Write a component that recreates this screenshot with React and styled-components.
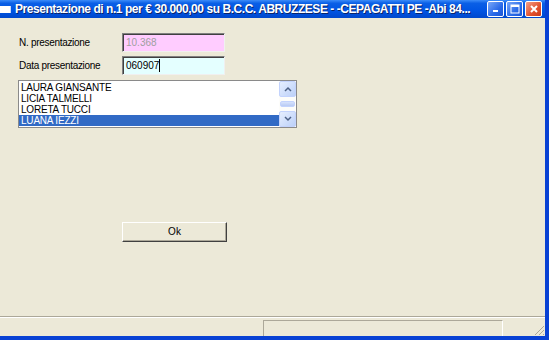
import React from 'react';
import styled, { createGlobalStyle } from 'styled-components';

const Global = createGlobalStyle`
  html, body {
    margin: 0;
    padding: 0;
    background: #ece9d8;
  }
  #root {
    width: 549px;
    height: 340px;
  }
`;

const Finestra = styled.div`
  width: 549px;
  height: 340px;
  box-sizing: border-box;
  display: flex;
  flex-direction: column;
  border-right: 4px solid #0841d4;
  border-bottom: 4px solid #0841d4;
  font-family: "Liberation Sans", Arial, sans-serif;
  overflow: hidden;
`;

const BarraTitolo = styled.div`
  height: 18px;
  flex: none;
  display: flex;
  align-items: center;
  margin-right: -4px;
  background: linear-gradient(180deg, #3c8cf8 0%, #0a5fe6 18%, #0054e3 60%, #0048cc 100%);
  color: #fff;
`;

const IconaTitolo = styled.div`
  width: 10px;
  height: 7px;
  margin: 1px 4px 0 0;
  background: #fff;
  border-right: 1px solid #c8d8f8;
`;

const TestoTitolo = styled.div`
  flex: 1;
  font-weight: bold;
  font-size: 12px;
  letter-spacing: -0.45px;
  white-space: nowrap;
  overflow: hidden;
  text-shadow: 1px 1px 0 #0a246a;
`;

const Pulsanti = styled.div`
  display: flex;
  gap: 2px;
  margin-right: 7px;
`;

const PulsanteFinestra = styled.div`
  width: 17px;
  height: 16px;
  border: 1px solid #fff;
  border-radius: 2px;
  box-sizing: border-box;
  background: ${p => (p.$close ? 'linear-gradient(135deg, #f3a08a, #e2512d 60%, #c93a1c)' : 'linear-gradient(135deg, #7aa8f8, #2a6ae8 60%, #1c55d4)')};
  display: flex;
  align-items: center;
  justify-content: center;
`;

const Corpo = styled.div`
  flex: 1;
  display: flex;
  flex-direction: column;
  background: #ece9d8;
`;

const Modulo = styled.div`
  flex: 1;
  display: flex;
  flex-direction: column;
  padding: 15px 0 0 19px;
`;

const Riga = styled.div`
  display: flex;
  align-items: center;
  height: 19px;
  margin-bottom: 4px;
`;

const Etichetta = styled.div`
  width: 103px;
  font-size: 10px;
  letter-spacing: -0.3px;
  color: #000;
`;

const Campo = styled.div`
  width: 103px;
  height: 19px;
  box-sizing: border-box;
  border-top: 1px solid #808080;
  border-left: 1px solid #808080;
  border-right: 1px solid #f0f0f0;
  border-bottom: 1px solid #f0f0f0;
  box-shadow: inset 1px 1px 0 #404040;
  background: ${p => p.$bg};
  color: ${p => p.$color};
  font-size: 10px;
  padding: 3px 0 0 3px;
  display: flex;
  align-items: flex-start;
`;

const Cursore = styled.span`
  display: inline-block;
  width: 1px;
  height: 13px;
  background: #000;
  margin-top: -1px;
`;

const Lista = styled.div`
  width: 279px;
  height: 48px;
  margin: 1px 0 0 -1px;
  box-sizing: border-box;
  border: 1px solid #8a8a8a;
  background: #fff;
  display: flex;
`;

const Voci = styled.div`
  flex: 1;
  padding-top: 1px;
`;

const Voce = styled.div`
  height: 11px;
  line-height: 11px;
  font-size: 10px;
  letter-spacing: -0.2px;
  padding-left: 2px;
  background: ${p => (p.$sel ? '#316ac5' : 'transparent')};
  color: ${p => (p.$sel ? '#fff' : '#000')};
  overflow: hidden;
  white-space: nowrap;
`;

const Scorrimento = styled.div`
  width: 17px;
  display: flex;
  flex-direction: column;
  background: #fdfdfa;
`;

const Freccia = styled.div`
  height: 16px;
  box-sizing: border-box;
  border: 1px solid #c3d3fd;
  border-radius: 2px;
  background: linear-gradient(135deg, #e6efff, #bcd0f8);
  display: flex;
  align-items: center;
  justify-content: center;
`;

const Pista = styled.div`
  flex: 1;
  display: flex;
  align-items: center;
  justify-content: center;
`;

const Cursorino = styled.div`
  width: 15px;
  height: 6px;
  border-radius: 2px;
  background: linear-gradient(180deg, #d6e2fc, #b8cbf4);
  border: 1px solid #c3d3fd;
  box-sizing: border-box;
`;

const ZonaPulsante = styled.div`
  margin: 93px 0 0 103px;
`;

const PulsanteOk = styled.button`
  width: 105px;
  height: 20px;
  box-sizing: border-box;
  background: #ece9d8;
  border: none;
  border-top: 1px solid #fff;
  border-left: 1px solid #fff;
  border-right: 1px solid #404040;
  border-bottom: 1px solid #404040;
  box-shadow: inset -1px -1px 0 #aca899;
  font-family: "Liberation Sans", Arial, sans-serif;
  font-size: 10px;
  color: #000;
  padding: 0;
`;

const Separatore = styled.div`
  height: 1px;
  background: #aca899;
  border-bottom: 1px solid #fff;
`;

const BarraStato = styled.div`
  height: 18px;
  display: flex;
  align-items: flex-end;
  padding-left: 263px;
`;

const Pannello = styled.div`
  width: 240px;
  height: 16px;
  box-sizing: border-box;
  border-top: 1px solid #aca899;
  border-left: 1px solid #aca899;
  border-right: 1px solid #fff;
  border-bottom: none;
`;

const Maniglia = styled.svg`
  margin-left: auto;
  display: block;
`;

export default function App() {
  return (
    <>
      <Global />
      <Finestra>
        <BarraTitolo>
          <IconaTitolo />
          <TestoTitolo>Presentazione di n.1 per € 30.000,00 su B.C.C. ABRUZZESE - -CEPAGATTI PE -Abi 84...</TestoTitolo>
          <Pulsanti>
            <PulsanteFinestra>
              <svg width="8" height="8"><rect x="1" y="5" width="5" height="2" fill="#fff" /></svg>
            </PulsanteFinestra>
            <PulsanteFinestra>
              <svg width="10" height="10"><rect x="1" y="1" width="8" height="8" fill="none" stroke="#fff" strokeWidth="1" /><rect x="1" y="1" width="8" height="2" fill="#fff" /></svg>
            </PulsanteFinestra>
            <PulsanteFinestra $close>
              <svg width="10" height="10"><path d="M2 2 L8 8 M8 2 L2 8" stroke="#fff" strokeWidth="2" /></svg>
            </PulsanteFinestra>
          </Pulsanti>
        </BarraTitolo>
        <Corpo>
          <Modulo>
            <Riga>
              <Etichetta>N. presentazione</Etichetta>
              <Campo $bg="#ffccff" $color="#a0a0a0">10.368</Campo>
            </Riga>
            <Riga>
              <Etichetta>Data presentazione</Etichetta>
              <Campo $bg="#e4ffff" $color="#000">060907<Cursore /></Campo>
            </Riga>
            <Lista>
              <Voci>
                <Voce>LAURA GIANSANTE</Voce>
                <Voce>LICIA TALMELLI</Voce>
                <Voce>LORETA TUCCI</Voce>
                <Voce $sel>LUANA IEZZI</Voce>
              </Voci>
              <Scorrimento>
                <Freccia>
                  <svg width="8" height="6"><path d="M1 5 L4 2 L7 5" fill="none" stroke="#4d6185" strokeWidth="1.5" /></svg>
                </Freccia>
                <Pista><Cursorino /></Pista>
                <Freccia>
                  <svg width="8" height="6"><path d="M1 1 L4 4 L7 1" fill="none" stroke="#4d6185" strokeWidth="1.5" /></svg>
                </Freccia>
              </Scorrimento>
            </Lista>
            <ZonaPulsante>
              <PulsanteOk>Ok</PulsanteOk>
            </ZonaPulsante>
          </Modulo>
          <Separatore />
          <BarraStato>
            <Pannello />
            <Maniglia width="12" height="12">
              <path d="M11 2 L2 11 M11 6 L6 11 M11 10 L10 11" stroke="#aca899" strokeWidth="1" />
            </Maniglia>
          </BarraStato>
        </Corpo>
      </Finestra>
    </>
  );
}
